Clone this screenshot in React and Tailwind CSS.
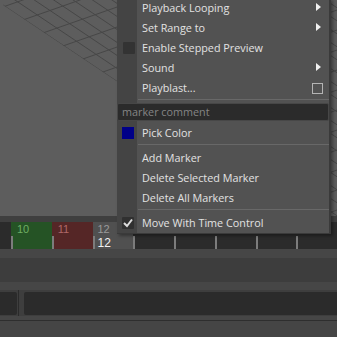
import React from "react";

const FONT = { fontFamily: '"Open Sans", "Liberation Sans", Arial, sans-serif' };
const TFONT = { fontFamily: '"Liberation Sans", Arial, sans-serif' };

function Grid() {
  const a = [];
  for (let k = 0; k < 26; k++) {
    const c = 5 - 0.67 * 3 - k * 13;
    a.push(<line key={"a" + k} x1={0} y1={c} x2={337} y2={c + 0.67 * 337} />);
  }
  const b = [];
  for (let k = 0; k < 30; k++) {
    const bb = 8 + k * 20;
    b.push(<line key={"b" + k} x1={0} y1={bb} x2={337} y2={bb - 0.35 * 337} />);
  }
  return (
    <svg width="337" height="216" className="block">
      <defs>
        <clipPath id="g">
          <polygon points="3,5 3,0 337,0 337,229" />
        </clipPath>
      </defs>
      <g clipPath="url(#g)" stroke="#474747" strokeWidth="1" fill="none">
        {a}
        {b}
      </g>
    </svg>
  );
}

function Arrow() {
  return (
    <svg width="5" height="8" className="mb-[2px]">
      <path d="M0 0 L5 4 L0 8 Z" fill="#f0f0f0" />
    </svg>
  );
}

function Row({ left, label, right, pr = "pr-[8px]" }) {
  return (
    <div className="flex h-[20px] items-center">
      <div className="flex h-full w-[20px] items-center justify-center">{left}</div>
      <div className={`flex flex-1 items-center justify-between pl-[5px] ${pr}`}>
        <span className="text-[10.8px] leading-[20px] text-[#e2e2e2]">{label}</span>
        {right}
      </div>
    </div>
  );
}

function Sep() {
  return (
    <div className="flex">
      <div className="w-[21px]" />
      <div className="mb-[3px] mt-[1px] h-px flex-1 bg-[#686868]" />
    </div>
  );
}

function Menu() {
  return (
    <div
      className="absolute left-[117px] top-[-2px] w-[214px] border-r-2 border-b border-[#3a3a3a] bg-[#525252] shadow-[2px_2px_3px_rgba(0,0,0,0.35)]"
      style={FONT}
    >
      <div className="absolute left-0 top-0 bottom-0 w-[20px] bg-[#444444]" />
      <div className="relative">
        <Row label="Playback Looping" right={<Arrow />} />
        <Row label="Set Range to" right={<Arrow />} />
        <Row
          left={<div className="ml-[4px] h-[12px] w-[12px] rounded-[1px] bg-[#333333]" />}
          label="Enable Stepped Preview"
        />
        <Row label="Sound" right={<Arrow />} />
        <Row
          label="Playblast..."
          pr="pr-[6px]"
          right={<div className="h-[11px] w-[11px] border border-[#b4b4b4]" />}
        />
        <Sep />
        <div className="mb-[2px] flex h-[18px] items-center rounded-[2px] border border-[#474747] bg-[#2b2b2b] pl-[4px] text-[10.8px] text-[#858585]">
          marker comment
        </div>
        <Row
          left={<div className="ml-[2px] h-[12px] w-[12px] bg-[#000088]" />}
          label="Pick Color"
        />
        <Sep />
        <Row label="Add Marker" />
        <Row label="Delete Selected Marker" />
        <Row label="Delete All Markers" />
        <Sep />
        <Row
          left={
            <div className="ml-[2px] flex h-[12px] w-[12px] items-center justify-center rounded-[1px] bg-[#303030]">
              <svg width="10" height="10">
                <path d="M1 5 L4 8 L9 1.5" stroke="#dcdcdc" strokeWidth="2" fill="none" />
              </svg>
            </div>
          }
          label="Move With Time Control"
        />
      </div>
    </div>
  );
}

function Frame({ children, bg = "" }) {
  return (
    <div className={`relative flex h-full w-[41px] flex-col pt-[1px] ${bg}`}>
      {children}
      <div className="absolute bottom-0 left-0 h-[13px] w-[2px] bg-[#7c7c7c]" />
    </div>
  );
}

export default function App() {
  return (
    <div className="relative h-[337px] w-[337px] overflow-hidden bg-[#454545]" style={FONT}>
      <div className="h-[216px] bg-[#5d5d5d]">
        <Grid />
      </div>
      <div className="h-[6px] bg-[#3f3f3f]" />
      <div className="flex h-[27px] bg-[#2b2b2b] pl-[11px] text-[11px] leading-[12px]" style={TFONT}>
        <Frame bg="bg-[#255325]">
          <span className="h-[12px] pl-[6px] text-[#6fae64]">10</span>
        </Frame>
        <Frame bg="bg-[#552626]">
          <span className="h-[12px] pl-[6px] text-[#b06868]">11</span>
        </Frame>
        <Frame bg="bg-[#505050]">
          <span className="h-[12px] pl-[5px] text-[#9a9a9a]">12</span>
          <span className="mt-[2px] h-[12px] pl-[5px] text-[12px] leading-[12px] text-[#f2f2f2]">12</span>
        </Frame>
        <Frame />
        <Frame />
        <Frame />
        <Frame />
        <Frame />
      </div>
      <div className="h-[9px] bg-[#464646]" />
      <div className="h-[24px] bg-[#3d3d3d]" />
      <div className="h-[8px] bg-[#464646]" />
      <div className="flex h-[26px] items-center bg-[#3e3e3e]">
        <div className="h-[23px] w-[17px] rounded-r-[2px] bg-[#2b2b2b]" />
        <div className="ml-px h-full w-px bg-[#2b2b2b]" />
        <div className="ml-[5px] h-[23px] flex-1 rounded-l-[2px] bg-[#2b2b2b]" />
      </div>
      <div className="h-[4px] bg-[#464646]" />
      <div className="h-px bg-[#2e2e2e]" />
      <Menu />
    </div>
  );
}
